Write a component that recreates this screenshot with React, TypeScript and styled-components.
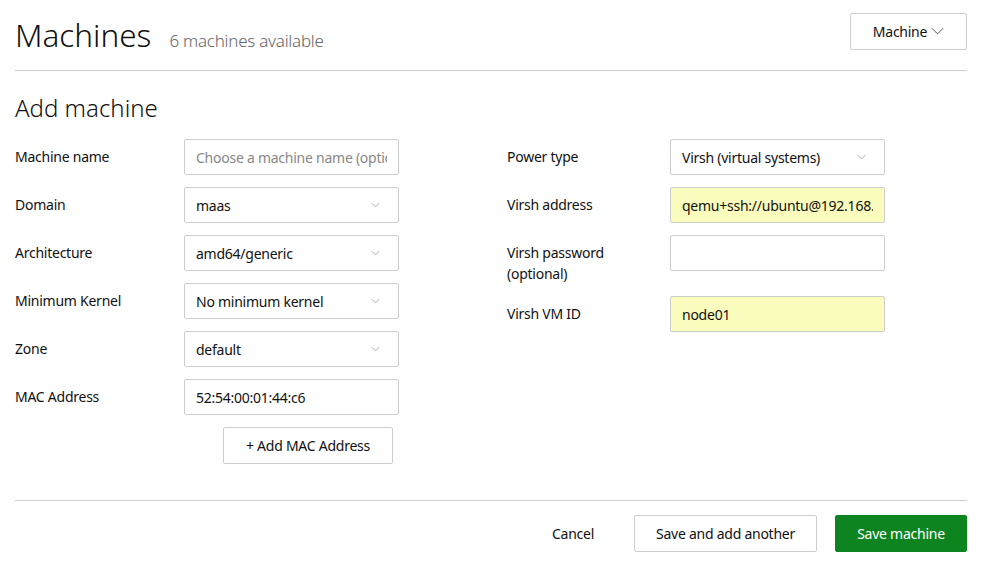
import React from 'react';
import styled, { createGlobalStyle } from 'styled-components';

const GlobalStyle = createGlobalStyle`
  html, body {
    margin: 0;
    padding: 0;
    background: #fff;
  }
  body {
    font-family: "Noto Sans", "Open Sans", sans-serif;
    color: #111;
    font-size: 14px;
    letter-spacing: -0.25px;
  }
`;

const Page = styled.div`
  width: 952px;
  padding: 0 15px;
`;

const Header = styled.header`
  display: flex;
  align-items: center;
  justify-content: space-between;
  height: 70px;
  border-bottom: 1px solid #cdcdcd;
`;

const TitleGroup = styled.div`
  display: flex;
  align-items: baseline;
  gap: 18px;
  margin-top: -2px;
`;

const PageTitle = styled.h1`
  margin: 0;
  font-size: 31.5px;
  font-weight: 300;
  color: #111;
  letter-spacing: 0;
`;

const Subtitle = styled.span`
  font-size: 17px;
  font-weight: 300;
  color: #666;
`;

const Button = styled.button<{ $variant?: 'default' | 'positive' | 'base' }>`
  height: 37px;
  padding: 0 16px;
  border-radius: 2px;
  font-family: inherit;
  font-size: 14px;
  letter-spacing: -0.25px;
  font-weight: 400;
  white-space: nowrap;
  display: inline-flex;
  align-items: center;
  justify-content: center;
  gap: 4px;
  cursor: pointer;
  border: 1px solid ${p => (p.$variant === 'positive' ? '#0e8420' : p.$variant === 'base' ? 'transparent' : '#cdcdcd')};
  background: ${p => (p.$variant === 'positive' ? '#0e8420' : '#fff')};
  color: ${p => (p.$variant === 'positive' ? '#fff' : '#111')};
`;

const MenuButton = styled(Button)`
  width: 117px;
  margin-top: -8px;
  padding: 0;
`;

const SectionTitle = styled.h2`
  margin: 21px 0 15px;
  font-size: 24px;
  font-weight: 300;
  line-height: 32px;
  letter-spacing: 0;
  color: #111;
`;

const FormColumns = styled.div`
  display: grid;
  grid-template-columns: 492px 1fr;
  height: 361px;
`;

const FieldList = styled.div`
  display: flex;
  flex-direction: column;
  gap: 12px;
`;

const Row = styled.div<{ $labelWidth: number }>`
  display: grid;
  grid-template-columns: ${p => p.$labelWidth}px 215px;
  align-items: start;
`;

const Label = styled.label`
  padding-top: 7px;
  line-height: 21px;
  font-size: 14px;
  color: #111;
`;

const Input = styled.input<{ $autofill?: boolean }>`
  box-sizing: border-box;
  width: 215px;
  height: 36px;
  padding: 0 11px;
  border: 1px solid #cdcdcd;
  border-radius: 2px;
  font-family: inherit;
  font-size: 14px;
  letter-spacing: -0.25px;
  color: #111;
  background: ${p => (p.$autofill ? '#fafcbd' : '#fff')};
  outline: none;

  &::placeholder {
    color: #888;
  }
`;

const SelectBox = styled.div`
  box-sizing: border-box;
  width: 215px;
  height: 36px;
  padding: 0 11px;
  border: 1px solid #cdcdcd;
  border-radius: 2px;
  display: flex;
  align-items: center;
  justify-content: space-between;
  font-size: 14px;
  color: #111;
  background: #fff;
`;

const ChevronSlot = styled.span`
  display: flex;
  margin-right: 7px;
`;

const ButtonRow = styled.div`
  padding-left: 208px;
`;

const AddMacButton = styled(Button)`
  width: 170px;
`;

const Footer = styled.footer`
  border-top: 1px solid #cdcdcd;
  display: flex;
  justify-content: flex-end;
  align-items: center;
  gap: 18px;
  padding-top: 14px;
`;

const CancelButton = styled(Button)`
  width: 86px;
  padding: 0;
`;

const FooterButton = styled(Button)<{ $width: number }>`
  width: ${p => p.$width}px;
`;

const Chevron = ({ size = 9, color = '#999', weight = 1.4 }: { size?: number; color?: string; weight?: number }) => (
  <svg width={size} height={Math.round(size / 2) + 1} viewBox="0 0 16 9" fill="none">
    <path d="M1 1l7 7 7-7" stroke={color} strokeWidth={weight} />
  </svg>
);

const Select = ({ value }: { value: string }) => (
  <SelectBox>
    <span>{value}</span>
    <ChevronSlot>
      <Chevron />
    </ChevronSlot>
  </SelectBox>
);

export default function App() {
  return (
    <>
      <GlobalStyle />
      <Page>
        <Header>
          <TitleGroup>
            <PageTitle>Machines</PageTitle>
            <Subtitle>6 machines available</Subtitle>
          </TitleGroup>
          <MenuButton>
            Machine
            <Chevron size={13} color="#444" weight={1.1} />
          </MenuButton>
        </Header>

        <SectionTitle>Add machine</SectionTitle>

        <FormColumns>
          <FieldList>
            <Row $labelWidth={169}>
              <Label>Machine name</Label>
              <Input placeholder="Choose a machine name (optional)" />
            </Row>
            <Row $labelWidth={169}>
              <Label>Domain</Label>
              <Select value="maas" />
            </Row>
            <Row $labelWidth={169}>
              <Label>Architecture</Label>
              <Select value="amd64/generic" />
            </Row>
            <Row $labelWidth={169}>
              <Label>Minimum Kernel</Label>
              <Select value="No minimum kernel" />
            </Row>
            <Row $labelWidth={169}>
              <Label>Zone</Label>
              <Select value="default" />
            </Row>
            <Row $labelWidth={169}>
              <Label>MAC Address</Label>
              <Input defaultValue="52:54:00:01:44:c6" />
            </Row>
            <ButtonRow>
              <AddMacButton>+ Add MAC Address</AddMacButton>
            </ButtonRow>
          </FieldList>

          <FieldList>
            <Row $labelWidth={163}>
              <Label>Power type</Label>
              <Select value="Virsh (virtual systems)" />
            </Row>
            <Row $labelWidth={163}>
              <Label>Virsh address</Label>
              <Input $autofill defaultValue="qemu+ssh://ubuntu@192.168.122.1/system" />
            </Row>
            <Row $labelWidth={163}>
              <Label>
                Virsh password
                <br />
                (optional)
              </Label>
              <Input type="password" />
            </Row>
            <Row $labelWidth={163}>
              <Label>Virsh VM ID</Label>
              <Input $autofill defaultValue="node01" />
            </Row>
          </FieldList>
        </FormColumns>

        <Footer>
          <CancelButton $variant="base">Cancel</CancelButton>
          <FooterButton $width={183}>Save and add another</FooterButton>
          <FooterButton $variant="positive" $width={132}>
            Save machine
          </FooterButton>
        </Footer>
      </Page>
    </>
  );
}
